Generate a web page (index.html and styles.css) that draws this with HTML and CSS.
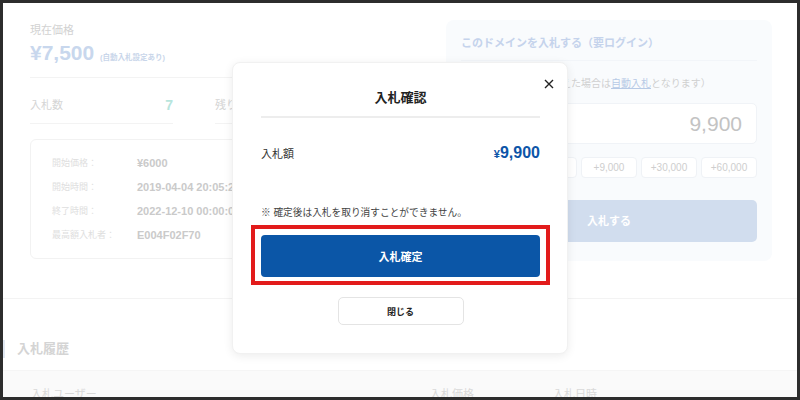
FILE: index.html
```html
<!DOCTYPE html>
<html lang="ja">
<head>
  <meta charset="UTF-8">
  <title>入札確認</title>
  <link rel="stylesheet" href="styles.css">
</head>
<body>
  <div class="frame">
    <!-- Auction page (faded behind the dialog) -->
    <div class="top">
      <div class="summary">
        <div class="price-label">現在価格</div>
        <div class="price">¥7,500 <span class="price-note">(自動入札設定あり)</span></div>

        <div class="stats">
          <div class="stat">
            <span>入札数</span>
            <span class="stat-value">7</span>
          </div>
          <div class="stat">
            <span>残り時間</span>
            <span class="stat-value"></span>
          </div>
        </div>

        <div class="detail">
          <div class="detail-row"><span class="detail-label">開始価格：</span><span class="detail-value">¥6000</span></div>
          <div class="detail-row"><span class="detail-label">開始時間：</span><span class="detail-value">2019-04-04 20:05:24</span></div>
          <div class="detail-row"><span class="detail-label">終了時間：</span><span class="detail-value">2022-12-10 00:00:00</span></div>
          <div class="detail-row"><span class="detail-label">最高額入札者：</span><span class="detail-value">E004F02F70</span></div>
        </div>
      </div>

      <div class="bid-panel">
        <div class="bid-title">このドメインを入札する（要ログイン）</div>
        <div class="bid-note">（入札額が最高額を超えた場合は<a href="#">自動入札</a>となります）</div>
        <div class="bid-input">9,900</div>
        <div class="chips">
          <span class="chip">+1,000</span>
          <span class="chip">+3,000</span>
          <span class="chip">+9,000</span>
          <span class="chip">+30,000</span>
          <span class="chip">+60,000</span>
        </div>
        <div class="bid-button">入札する</div>
      </div>
    </div>

    <div class="history">
      <div class="history-title">入札履歴</div>
      <div class="history-head">
        <span class="col-user">入札ユーザー</span>
        <span class="col-price">入札価格</span>
        <span class="col-date">入札日時</span>
      </div>
    </div>

    <!-- Confirm dialog -->
    <div class="modal">
      <svg class="modal-close" width="10" height="10" viewBox="0 0 10 10">
        <path d="M1 1 L9 9 M9 1 L1 9" stroke="#222" stroke-width="1.4" fill="none"/>
      </svg>
      <div class="modal-title">入札確認</div>

      <div class="amount">
        <span>入札額</span>
        <span class="amount-value"><small>¥</small>9,900</span>
      </div>

      <p class="warning">※ 確定後は入札を取り消すことができません。</p>

      <div class="highlight">
        <button class="confirm">入札確定</button>
      </div>

      <button class="close-btn">閉じる</button>
    </div>
  </div>
</body>
</html>
```

FILE: styles.css
```css
body {
  margin: 0;
  background: #2d2d2d;
  font-family: 'Liberation Sans', 'Noto Sans CJK JP', sans-serif;
}

.frame {
  position: relative;
  width: 800px;
  height: 400px;
  box-sizing: border-box;
  border: 3px solid #2d2d2d;
  background: #ffffff;
  overflow: hidden;
}

/* ---------- background page ---------- */

.top {
  display: flex;
  gap: 31px;
  padding: 17px 25px 37px 27px;
  border-bottom: 1px solid #f3f3f3;
}

.summary {
  width: 385px;
  padding-top: 3px;
}

.price-label {
  font-size: 11px;
  line-height: 14px;
  color: #d2d2d2;
}

.price {
  margin-top: 5px;
  padding-bottom: 8px;
  font-size: 21px;
  line-height: 22px;
  font-weight: bold;
  color: #c8d7ed;
  border-bottom: 1px solid #f3f3f3;
}

.price-note {
  font-size: 7.5px;
  font-weight: bold;
  color: #c9d6ea;
}

.stats {
  display: flex;
  gap: 42px;
}

.stat {
  width: 143px;
  display: flex;
  justify-content: space-between;
  align-items: center;
  padding: 20px 0 11px;
  font-size: 11px;
  line-height: 14px;
  color: #d5d5d5;
  border-bottom: 1px solid #f3f3f3;
}

.stat-value {
  font-size: 14px;
  font-weight: bold;
  color: #b8e5dd;
}

.detail {
  margin-top: 15px;
  height: 120px;
  box-sizing: border-box;
  padding: 11px 21px;
  border: 1px solid #f2f2f2;
  border-radius: 6px;
}

.detail-row {
  display: flex;
  line-height: 24px;
  white-space: nowrap;
}

.detail-label {
  width: 85px;
  font-size: 9px;
  color: #dedede;
}

.detail-value {
  font-size: 11px;
  font-weight: bold;
  color: #cacaca;
}

.bid-panel {
  width: 326px;
  box-sizing: border-box;
  padding: 15px 15px 19px;
  background: #f9fbfd;
  border-radius: 8px;
}

.bid-title {
  font-size: 11px;
  line-height: 16px;
  font-weight: bold;
  color: #c5d3ec;
  padding-bottom: 9px;
  border-bottom: 1px solid #f2f5f9;
}

.bid-note {
  margin-top: 16px;
  font-size: 10px;
  line-height: 14px;
  color: #d0d0d0;
  white-space: nowrap;
}

.bid-note a {
  color: #b7cae6;
}

.bid-input {
  margin-top: 12px;
  height: 41px;
  box-sizing: border-box;
  padding: 0 14px;
  background: #ffffff;
  border: 1px solid #f0f3f7;
  border-radius: 5px;
  font-size: 21px;
  line-height: 39px;
  text-align: right;
  color: #c3c3c3;
}

.chips {
  margin-top: 13px;
  display: flex;
  gap: 4px;
}

.chip {
  flex: 1;
  height: 21px;
  line-height: 19px;
  box-sizing: border-box;
  background: #ffffff;
  border: 1px solid #eff2f6;
  border-radius: 4px;
  font-size: 10px;
  text-align: center;
  color: #cecece;
}

.bid-button {
  margin-top: 22px;
  height: 42px;
  line-height: 42px;
  background: #d1ddee;
  border-radius: 5px;
  font-size: 11px;
  font-weight: bold;
  text-align: center;
  color: #ffffff;
}

.history-title {
  margin-top: 41px;
  padding-left: 12px;
  border-left: 2px solid #e0e7f1;
  font-size: 13px;
  line-height: 18px;
  font-weight: bold;
  color: #d4d4d4;
}

.history-head {
  margin-top: 12px;
  height: 40px;
  padding: 16px 0 0 28px;
  background: #fafafa;
  border-top: 1px solid #f5f5f5;
  font-size: 11px;
  line-height: 14px;
  color: #d9d9d9;
  display: flex;
}

.col-user { width: 399px; }
.col-price { width: 123px; }

/* ---------- dialog ---------- */

.modal {
  position: absolute;
  left: 229px;
  top: 59px;
  width: 336px;
  box-sizing: border-box;
  padding: 26px 27px 28px 28px;
  background: #ffffff;
  border-radius: 8px;
  box-shadow: 0 2px 10px rgba(0, 0, 0, 0.08);
  border: 1px solid #f1f1f1;
}

.modal-close {
  position: absolute;
  right: 13px;
  top: 16px;
}

.modal-title {
  font-size: 13px;
  line-height: 18px;
  font-weight: bold;
  text-align: center;
  color: #222222;
  padding-bottom: 9px;
  border-bottom: 2px solid #ededed;
}

.amount {
  margin-top: 24px;
  display: flex;
  justify-content: space-between;
  align-items: center;
  font-size: 11px;
  line-height: 22px;
  color: #333333;
}

.amount-value {
  font-size: 16px;
  font-weight: bold;
  color: #0d55a8;
}

.amount-value small {
  font-size: 11px;
}

.warning {
  margin: 41px 0 0;
  font-size: 9.7px;
  line-height: 14px;
  color: #444444;
}

.highlight {
  margin: 5px -10px 0;
  padding: 6px 6px 4px;
  border: 4px solid #e21b1b;
}

.confirm {
  display: block;
  width: 100%;
  height: 42px;
  border: none;
  border-radius: 4px;
  background: #0b56a7;
  color: #ffffff;
  font-family: inherit;
  font-size: 11px;
  font-weight: bold;
}

.close-btn {
  display: block;
  margin: 12px auto 0;
  width: 126px;
  height: 28px;
  background: #ffffff;
  border: 1px solid #e4e4e4;
  border-radius: 5px;
  font-family: inherit;
  font-size: 9px;
  font-weight: bold;
  color: #222222;
}
```
